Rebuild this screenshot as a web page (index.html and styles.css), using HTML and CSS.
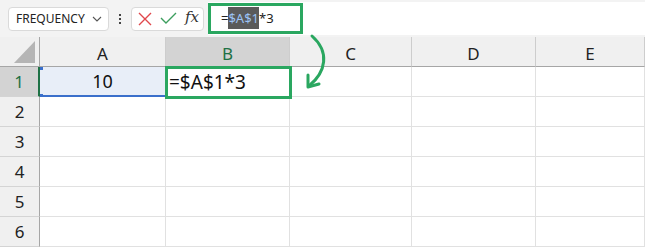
FILE: index.html
```html
<!DOCTYPE html>
<html lang="en">

<head>
    <meta charset="UTF-8">
    <meta name="viewport" content="width=device-width, initial-scale=1.0">
    <title>Absolute reference</title>
    <link rel="stylesheet" href="styles.css">
</head>

<body>
    <div class="app">
        <div class="formula-bar">
            <div class="name-box">
                <span>FREQUENCY</span>
                <svg class="chevron" width="10" height="6" viewBox="0 0 10 6">
                    <path d="M1 1 L5 5 L9 1" fill="none" stroke="#555" stroke-width="1.1" />
                </svg>
            </div>
            <div class="grip"><i></i><i></i><i></i></div>
            <div class="fx-tools">
                <svg width="14" height="14" viewBox="0 0 14 14">
                    <path d="M1 1 L13 13 M13 1 L1 13" stroke="#e0474c" stroke-width="1.4" />
                </svg>
                <svg width="17" height="13" viewBox="0 0 17 13">
                    <path d="M1 6 L6 11 L16 1" fill="none" stroke="#3c9e5e" stroke-width="1.4" />
                </svg>
                <span class="fx">fx</span>
            </div>
            <div class="formula-input">
                <!-- highlighted formula -->
                <div class="formula-mark">=<span class="ref">$A$1</span>*3</div>
            </div>
        </div>

        <div class="sheet">
            <div class="corner"><span class="tri"></span></div>
            <div class="col-head">A</div>
            <div class="col-head active">B</div>
            <div class="col-head">C</div>
            <div class="col-head">D</div>
            <div class="col-head">E</div>

            <div class="row-head active">1</div>
            <div class="cell num ref-cell">10</div>
            <div class="cell edit-cell">=$A$1*3</div>
            <div class="cell"></div>
            <div class="cell"></div>
            <div class="cell"></div>

            <div class="row-head">2</div>
            <div class="cell"></div><div class="cell"></div><div class="cell"></div><div class="cell"></div><div class="cell"></div>
            <div class="row-head">3</div>
            <div class="cell"></div><div class="cell"></div><div class="cell"></div><div class="cell"></div><div class="cell"></div>
            <div class="row-head">4</div>
            <div class="cell"></div><div class="cell"></div><div class="cell"></div><div class="cell"></div><div class="cell"></div>
            <div class="row-head">5</div>
            <div class="cell"></div><div class="cell"></div><div class="cell"></div><div class="cell"></div><div class="cell"></div>
            <div class="row-head">6</div>
            <div class="cell"></div><div class="cell"></div><div class="cell"></div><div class="cell"></div><div class="cell"></div>
        </div>

        <!-- arrow from the formula bar down to the cell -->
        <svg class="arrow" width="645" height="247" viewBox="0 0 645 247">
            <path d="M312 36 C330 52 326 72 309 86" fill="none" stroke="#2aa760" stroke-width="3" stroke-linecap="round" />
            <path d="M308 75 L308 87 L319 84" fill="none" stroke="#2aa760" stroke-width="3" stroke-linecap="round" stroke-linejoin="round" />
        </svg>
    </div>
</body>

</html>
```

FILE: styles.css
```css
html,
body {
    margin: 0;
    padding: 0;
    background: #fff;
    font-family: "Noto Sans", "Open Sans", sans-serif;
}

.app {
    position: relative;
    width: 645px;
    height: 247px;
    overflow: hidden;
}

.formula-bar {
    height: 37px;
    background: #f3f3f3;
    display: flex;
    align-items: center;
    padding-left: 8px;
    box-sizing: border-box;
}

.name-box {
    width: 101px;
    height: 24px;
    box-sizing: border-box;
    background: #fff;
    border: 1px solid #dadada;
    border-radius: 4px;
    display: flex;
    align-items: center;
    justify-content: space-between;
    padding: 0 6px 0 7px;
    font-size: 12px;
    color: #222;
}

.grip {
    width: 22px;
    display: flex;
    flex-direction: column;
    align-items: center;
    gap: 2px;
}

.grip i {
    width: 2px;
    height: 2px;
    background: #444;
}

.fx-tools {
    width: 73px;
    height: 24px;
    box-sizing: border-box;
    background: #fff;
    border: 1px solid #dadada;
    border-radius: 4px;
    display: flex;
    align-items: center;
    gap: 8px;
    padding-left: 6px;
}

.fx {
    font-family: "DejaVu Serif", "Liberation Serif", serif;
    font-style: italic;
    font-size: 15px;
    color: #333;
    margin-top: -3px;
}

.formula-input {
    flex: 1;
    margin-left: 4px;
    height: 33px;
    background: #fff;
    padding: 1px 0;
    box-sizing: border-box;
}

.formula-mark {
    width: 95px;
    height: 31px;
    box-sizing: border-box;
    border: 3px solid #2aa760;
    padding-left: 10px;
    font-size: 13px;
    line-height: 25px;
    color: #222;
}

.formula-mark .ref {
    background: #5a5a5a;
    color: #9cc3f5;
    padding: 2px 0;
}

.sheet {
    display: grid;
    grid-template-columns: 40px 126px 124px 122px 124px 109px;
    grid-auto-rows: 30px;
}

.corner,
.col-head,
.row-head,
.cell {
    box-sizing: border-box;
}

.corner {
    background: #f0f0f0;
    border-right: 1px solid #a6a6a6;
    border-bottom: 1px solid #a6a6a6;
    position: relative;
}

.corner .tri {
    position: absolute;
    right: 4px;
    bottom: 3px;
    width: 21px;
    height: 22px;
    background: #b5b5b5;
    clip-path: polygon(100% 0, 100% 100%, 0 100%);
}

.col-head {
    background: #f0f0f0;
    border-right: 1px solid #cdcdcd;
    border-bottom: 1px solid #a6a6a6;
    display: flex;
    justify-content: center;
    align-items: center;
    padding-top: 3px;
    font-size: 17px;
    color: #222;
}

.row-head {
    background: #f0f0f0;
    border-right: 1px solid #a6a6a6;
    border-bottom: 1px solid #d4d4d4;
    display: flex;
    justify-content: center;
    align-items: center;
    font-size: 17px;
    color: #222;
}

.col-head.active,
.row-head.active {
    background: #d3d3d3;
    color: #1e7145;
}

.row-head.active {
    border-right: 2px solid #1e7145;
}

.cell {
    border-right: 1px solid #e1e1e1;
    border-bottom: 1px solid #e1e1e1;
    font-size: 18px;
    color: #111;
    display: flex;
    align-items: center;
}

.cell.num {
    justify-content: center;
}

.ref-cell {
    background: #e8eef8;
    border-bottom: 2px solid #3a6fcb;
    position: relative;
}

.ref-cell::before,
.ref-cell::after {
    content: "";
    position: absolute;
    left: 0;
    width: 3px;
    height: 3px;
    background: #3a6fcb;
}

.ref-cell::before {
    top: 0;
}

.ref-cell::after {
    bottom: -2px;
}

.edit-cell {
    position: relative;
    padding-left: 3px;
    font-size: 19px;
}

.edit-cell::after {
    content: "";
    position: absolute;
    left: -1px;
    top: -1px;
    right: -3px;
    bottom: -3px;
    border: 3px solid #2aa760;
}

.arrow {
    position: absolute;
    left: 0;
    top: 0;
    pointer-events: none;
}
```
